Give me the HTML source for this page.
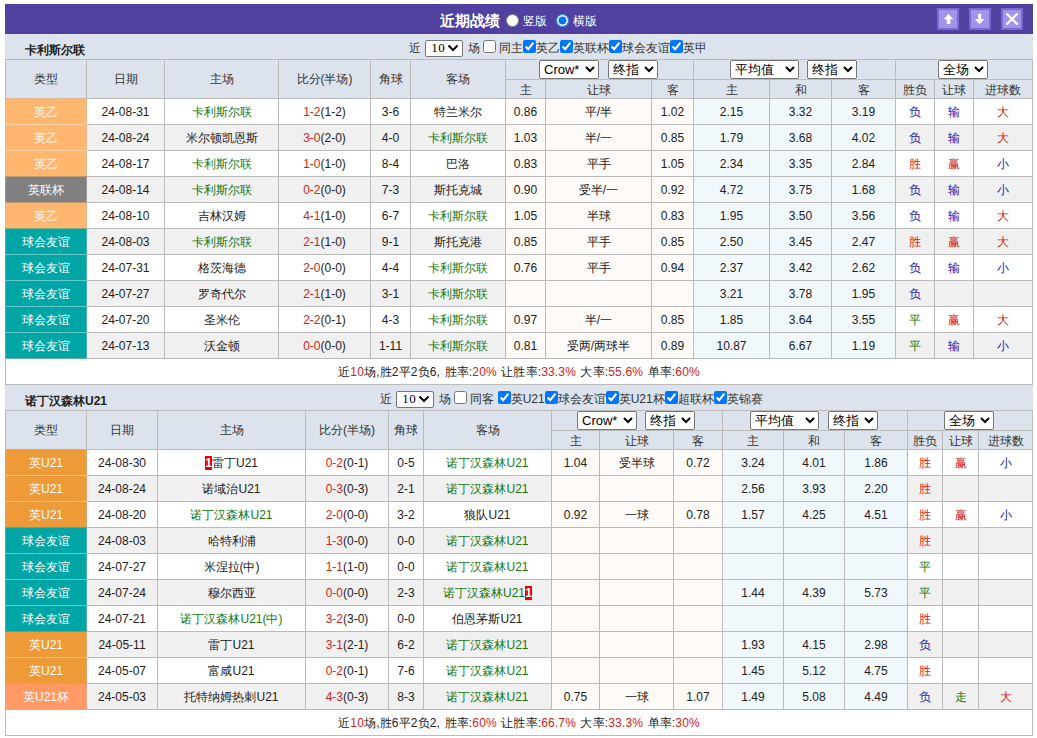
<!DOCTYPE html><html><head><meta charset="utf-8"><style>
html,body{margin:0;padding:0;background:#fff;width:1037px;height:738px;overflow:hidden}
body{font-family:"Liberation Sans", sans-serif;font-size:12px;color:#333;position:relative}
body>div{position:absolute;box-sizing:border-box}
.tt{color:#fff;font-size:12px;line-height:1;white-space:nowrap}
.rd{margin:0;width:13px;height:13px;display:block}
.flt{white-space:pre;font-size:12px;line-height:17px;height:17px;color:#333;display:flex;align-items:flex-start}
.flt input{width:13px;height:13px;margin:0;flex:none}
.flt .t{position:relative;top:0px}
select{margin:0;flex:none}
.n{flex:none;margin:0 1px;box-sizing:border-box;width:38px;height:17px;border:1px solid #767676;border-radius:2px;background:#fff;position:relative}
.n b{position:absolute;left:5px;top:-1px;font-weight:normal;font-family:"Liberation Serif",serif;font-size:13px;line-height:15px;color:#000;letter-spacing:0.3px}
.n svg{position:absolute;left:21px;top:3px}
select.s{height:19px;font-family:"Liberation Sans",sans-serif;font-size:13px;display:block}
.bd{display:inline-block;background:#E00;color:#fff;font-weight:bold;width:7px;height:14px;line-height:14px;text-align:center;font-size:12px}
</style></head><body><div style="left:5px;top:4px;width:1028px;height:30px;background:#5040A0"></div>
<div class="tt" style="left:440px;top:13px;font-size:15px;font-weight:bold">近期战绩</div>
<div style="left:506px;top:14px"><input class="rd" type="radio" name="v"></div>
<div class="tt" style="left:523px;top:15px">竖版</div>
<div style="left:556px;top:14px"><input class="rd" type="radio" name="v" checked></div>
<div class="tt" style="left:573px;top:15px">横版</div>
<div style="left:937px;top:8px;width:22px;height:22px;background:#A292EA;box-shadow:inset 0 0 0 2px #7A6AD2"><svg width="22" height="22"><path d="M11.5 5.8 L16.3 11.3 H13.3 V16 H9.7 V11.3 H6.7 Z" fill="#fff"/></svg></div>
<div style="left:969px;top:8px;width:22px;height:22px;background:#A292EA;box-shadow:inset 0 0 0 2px #7A6AD2"><svg width="22" height="22"><path d="M10.6 16.2 L5.9 11 H9 V5.8 H12.3 V11 H15.3 Z" fill="#fff"/></svg></div>
<div style="left:1001px;top:8px;width:22px;height:22px;background:#A292EA;box-shadow:inset 0 0 0 2px #7A6AD2"><svg width="22" height="22"><path d="M5.5 5.5 L16.5 16.5 M16.5 5.5 L5.5 16.5" stroke="#fff" stroke-width="2.3"/></svg></div>
<div style="left:5px;top:34px;width:1028px;height:25px;background:#DCE3EC"></div>
<div style="left:5px;top:34px;width:1028px;height:1px;background:#E6E6FA"></div>
<div style="left:25px;top:38px;width:200px;height:22px;font-weight:bold;font-size:12px;line-height:25px;color:#222">卡利斯尔联</div>
<div class="flt" style="left:409px;top:40px"><span class="t">近 </span><span class="n"><b>10</b><svg width="12" height="8" viewBox="0 0 12 8"><path d="M1.5 1.5 L6 6 L10.5 1.5" fill="none" stroke="#000" stroke-width="2"/></svg></span><span class="t"> 场 </span><input type="checkbox"><span class="t"> 同主</span><input type="checkbox" checked><span class="t">英乙</span><input type="checkbox" checked><span class="t">英联杯</span><input type="checkbox" checked><span class="t">球会友谊</span><input type="checkbox" checked><span class="t">英甲</span></div>
<div style="left:5px;top:59px;width:1028px;height:39px;background:#DCE3EC"></div>
<div style="left:6px;top:60px;width:80px;height:38px;display:flex;align-items:center;justify-content:center;white-space:nowrap;line-height:14px;color:#333333;"><span>类型</span></div>
<div style="left:87px;top:60px;width:77px;height:38px;display:flex;align-items:center;justify-content:center;white-space:nowrap;line-height:14px;color:#333333;"><span>日期</span></div>
<div style="left:165px;top:60px;width:113px;height:38px;display:flex;align-items:center;justify-content:center;white-space:nowrap;line-height:14px;color:#333333;"><span>主场</span></div>
<div style="left:279px;top:60px;width:91px;height:38px;display:flex;align-items:center;justify-content:center;white-space:nowrap;line-height:14px;color:#333333;"><span>比分(半场)</span></div>
<div style="left:371px;top:60px;width:39px;height:38px;display:flex;align-items:center;justify-content:center;white-space:nowrap;line-height:14px;color:#333333;"><span>角球</span></div>
<div style="left:411px;top:60px;width:94px;height:38px;display:flex;align-items:center;justify-content:center;white-space:nowrap;line-height:14px;color:#333333;"><span>客场</span></div>
<div style="left:506px;top:80px;width:39px;height:18px;display:flex;align-items:center;justify-content:center;white-space:nowrap;line-height:14px;color:#333333;"><span style="position:relative;top:1px">主</span></div>
<div style="left:546px;top:80px;width:105px;height:18px;display:flex;align-items:center;justify-content:center;white-space:nowrap;line-height:14px;color:#333333;"><span style="position:relative;top:1px">让球</span></div>
<div style="left:652px;top:80px;width:41px;height:18px;display:flex;align-items:center;justify-content:center;white-space:nowrap;line-height:14px;color:#333333;"><span style="position:relative;top:1px">客</span></div>
<div style="left:694px;top:80px;width:75px;height:18px;display:flex;align-items:center;justify-content:center;white-space:nowrap;line-height:14px;color:#333333;"><span style="position:relative;top:1px">主</span></div>
<div style="left:770px;top:80px;width:61px;height:18px;display:flex;align-items:center;justify-content:center;white-space:nowrap;line-height:14px;color:#333333;"><span style="position:relative;top:1px">和</span></div>
<div style="left:832px;top:80px;width:63px;height:18px;display:flex;align-items:center;justify-content:center;white-space:nowrap;line-height:14px;color:#333333;"><span style="position:relative;top:1px">客</span></div>
<div style="left:896px;top:80px;width:38px;height:18px;display:flex;align-items:center;justify-content:center;white-space:nowrap;line-height:14px;color:#333333;"><span style="position:relative;top:1px">胜负</span></div>
<div style="left:935px;top:80px;width:38px;height:18px;display:flex;align-items:center;justify-content:center;white-space:nowrap;line-height:14px;color:#333333;"><span style="position:relative;top:1px">让球</span></div>
<div style="left:974px;top:80px;width:58px;height:18px;display:flex;align-items:center;justify-content:center;white-space:nowrap;line-height:14px;color:#333333;"><span style="position:relative;top:1px">进球数</span></div>
<div style="left:539px;top:60px;width:60px;height:19px;"><select class="s" style="width:60px"><option>Crow*</option></select></div>
<div style="left:608px;top:60px;width:50px;height:19px;"><select class="s" style="width:50px"><option>终指</option></select></div>
<div style="left:730px;top:60px;width:69px;height:19px;"><select class="s" style="width:69px"><option>平均值</option></select></div>
<div style="left:807px;top:60px;width:50px;height:19px;"><select class="s" style="width:50px"><option>终指</option></select></div>
<div style="left:938px;top:60px;width:50px;height:19px;"><select class="s" style="width:50px"><option>全场</option></select></div>
<div style="left:6px;top:99px;width:80px;height:25px;display:flex;align-items:center;justify-content:center;white-space:nowrap;line-height:14px;background:#FFB66E;color:#FFFFFF;"><span>英乙</span></div>
<div style="left:87px;top:99px;width:77px;height:25px;display:flex;align-items:center;justify-content:center;white-space:nowrap;line-height:14px;background:#FFFFFF;color:#222222;"><span>24-08-31</span></div>
<div style="left:165px;top:99px;width:113px;height:25px;display:flex;align-items:center;justify-content:center;white-space:nowrap;line-height:14px;background:#FFFFFF;color:#157A15;"><span>卡利斯尔联</span></div>
<div style="left:279px;top:99px;width:91px;height:25px;display:flex;align-items:center;justify-content:center;white-space:nowrap;line-height:14px;background:#FFFFFF;color:#222222;"><span><span style="color:#D42020">1-2</span>(1-2)</span></div>
<div style="left:371px;top:99px;width:39px;height:25px;display:flex;align-items:center;justify-content:center;white-space:nowrap;line-height:14px;background:#FFFFFF;color:#222222;"><span>3-6</span></div>
<div style="left:411px;top:99px;width:94px;height:25px;display:flex;align-items:center;justify-content:center;white-space:nowrap;line-height:14px;background:#FFFFFF;color:#222222;"><span>特兰米尔</span></div>
<div style="left:506px;top:99px;width:39px;height:25px;display:flex;align-items:center;justify-content:center;white-space:nowrap;line-height:14px;background:#FDFAF7;color:#222222;"><span>0.86</span></div>
<div style="left:546px;top:99px;width:105px;height:25px;display:flex;align-items:center;justify-content:center;white-space:nowrap;line-height:14px;background:#FDFAF7;color:#222222;"><span>平/半</span></div>
<div style="left:652px;top:99px;width:41px;height:25px;display:flex;align-items:center;justify-content:center;white-space:nowrap;line-height:14px;background:#FDFAF7;color:#222222;"><span>1.02</span></div>
<div style="left:694px;top:99px;width:75px;height:25px;display:flex;align-items:center;justify-content:center;white-space:nowrap;line-height:14px;background:#F0F8FC;color:#222222;"><span>2.15</span></div>
<div style="left:770px;top:99px;width:61px;height:25px;display:flex;align-items:center;justify-content:center;white-space:nowrap;line-height:14px;background:#F0F8FC;color:#222222;"><span>3.32</span></div>
<div style="left:832px;top:99px;width:63px;height:25px;display:flex;align-items:center;justify-content:center;white-space:nowrap;line-height:14px;background:#F0F8FC;color:#222222;"><span>3.19</span></div>
<div style="left:896px;top:99px;width:38px;height:25px;display:flex;align-items:center;justify-content:center;white-space:nowrap;line-height:14px;background:#FFFFFF;color:#1818B0;"><span>负</span></div>
<div style="left:935px;top:99px;width:38px;height:25px;display:flex;align-items:center;justify-content:center;white-space:nowrap;line-height:14px;background:#FFFFFF;color:#1818B0;"><span>输</span></div>
<div style="left:974px;top:99px;width:58px;height:25px;display:flex;align-items:center;justify-content:center;white-space:nowrap;line-height:14px;background:#FFFFFF;color:#D42020;"><span>大</span></div>
<div style="left:6px;top:125px;width:80px;height:25px;display:flex;align-items:center;justify-content:center;white-space:nowrap;line-height:14px;background:#FFB66E;color:#FFFFFF;"><span>英乙</span></div>
<div style="left:87px;top:125px;width:77px;height:25px;display:flex;align-items:center;justify-content:center;white-space:nowrap;line-height:14px;background:#F0F0F0;color:#222222;"><span>24-08-24</span></div>
<div style="left:165px;top:125px;width:113px;height:25px;display:flex;align-items:center;justify-content:center;white-space:nowrap;line-height:14px;background:#F0F0F0;color:#222222;"><span>米尔顿凯恩斯</span></div>
<div style="left:279px;top:125px;width:91px;height:25px;display:flex;align-items:center;justify-content:center;white-space:nowrap;line-height:14px;background:#F0F0F0;color:#222222;"><span><span style="color:#D42020">3-0</span>(2-0)</span></div>
<div style="left:371px;top:125px;width:39px;height:25px;display:flex;align-items:center;justify-content:center;white-space:nowrap;line-height:14px;background:#F0F0F0;color:#222222;"><span>4-0</span></div>
<div style="left:411px;top:125px;width:94px;height:25px;display:flex;align-items:center;justify-content:center;white-space:nowrap;line-height:14px;background:#F0F0F0;color:#157A15;"><span>卡利斯尔联</span></div>
<div style="left:506px;top:125px;width:39px;height:25px;display:flex;align-items:center;justify-content:center;white-space:nowrap;line-height:14px;background:#FDFAF7;color:#222222;"><span>1.03</span></div>
<div style="left:546px;top:125px;width:105px;height:25px;display:flex;align-items:center;justify-content:center;white-space:nowrap;line-height:14px;background:#FDFAF7;color:#222222;"><span>半/一</span></div>
<div style="left:652px;top:125px;width:41px;height:25px;display:flex;align-items:center;justify-content:center;white-space:nowrap;line-height:14px;background:#FDFAF7;color:#222222;"><span>0.85</span></div>
<div style="left:694px;top:125px;width:75px;height:25px;display:flex;align-items:center;justify-content:center;white-space:nowrap;line-height:14px;background:#F0F8FC;color:#222222;"><span>1.79</span></div>
<div style="left:770px;top:125px;width:61px;height:25px;display:flex;align-items:center;justify-content:center;white-space:nowrap;line-height:14px;background:#F0F8FC;color:#222222;"><span>3.68</span></div>
<div style="left:832px;top:125px;width:63px;height:25px;display:flex;align-items:center;justify-content:center;white-space:nowrap;line-height:14px;background:#F0F8FC;color:#222222;"><span>4.02</span></div>
<div style="left:896px;top:125px;width:38px;height:25px;display:flex;align-items:center;justify-content:center;white-space:nowrap;line-height:14px;background:#F0F0F0;color:#1818B0;"><span>负</span></div>
<div style="left:935px;top:125px;width:38px;height:25px;display:flex;align-items:center;justify-content:center;white-space:nowrap;line-height:14px;background:#F0F0F0;color:#1818B0;"><span>输</span></div>
<div style="left:974px;top:125px;width:58px;height:25px;display:flex;align-items:center;justify-content:center;white-space:nowrap;line-height:14px;background:#F0F0F0;color:#D42020;"><span>大</span></div>
<div style="left:6px;top:151px;width:80px;height:25px;display:flex;align-items:center;justify-content:center;white-space:nowrap;line-height:14px;background:#FFB66E;color:#FFFFFF;"><span>英乙</span></div>
<div style="left:87px;top:151px;width:77px;height:25px;display:flex;align-items:center;justify-content:center;white-space:nowrap;line-height:14px;background:#FFFFFF;color:#222222;"><span>24-08-17</span></div>
<div style="left:165px;top:151px;width:113px;height:25px;display:flex;align-items:center;justify-content:center;white-space:nowrap;line-height:14px;background:#FFFFFF;color:#157A15;"><span>卡利斯尔联</span></div>
<div style="left:279px;top:151px;width:91px;height:25px;display:flex;align-items:center;justify-content:center;white-space:nowrap;line-height:14px;background:#FFFFFF;color:#222222;"><span><span style="color:#D42020">1-0</span>(1-0)</span></div>
<div style="left:371px;top:151px;width:39px;height:25px;display:flex;align-items:center;justify-content:center;white-space:nowrap;line-height:14px;background:#FFFFFF;color:#222222;"><span>8-4</span></div>
<div style="left:411px;top:151px;width:94px;height:25px;display:flex;align-items:center;justify-content:center;white-space:nowrap;line-height:14px;background:#FFFFFF;color:#222222;"><span>巴洛</span></div>
<div style="left:506px;top:151px;width:39px;height:25px;display:flex;align-items:center;justify-content:center;white-space:nowrap;line-height:14px;background:#FDFAF7;color:#222222;"><span>0.83</span></div>
<div style="left:546px;top:151px;width:105px;height:25px;display:flex;align-items:center;justify-content:center;white-space:nowrap;line-height:14px;background:#FDFAF7;color:#222222;"><span>平手</span></div>
<div style="left:652px;top:151px;width:41px;height:25px;display:flex;align-items:center;justify-content:center;white-space:nowrap;line-height:14px;background:#FDFAF7;color:#222222;"><span>1.05</span></div>
<div style="left:694px;top:151px;width:75px;height:25px;display:flex;align-items:center;justify-content:center;white-space:nowrap;line-height:14px;background:#F0F8FC;color:#222222;"><span>2.34</span></div>
<div style="left:770px;top:151px;width:61px;height:25px;display:flex;align-items:center;justify-content:center;white-space:nowrap;line-height:14px;background:#F0F8FC;color:#222222;"><span>3.35</span></div>
<div style="left:832px;top:151px;width:63px;height:25px;display:flex;align-items:center;justify-content:center;white-space:nowrap;line-height:14px;background:#F0F8FC;color:#222222;"><span>2.84</span></div>
<div style="left:896px;top:151px;width:38px;height:25px;display:flex;align-items:center;justify-content:center;white-space:nowrap;line-height:14px;background:#FFFFFF;color:#D42020;"><span>胜</span></div>
<div style="left:935px;top:151px;width:38px;height:25px;display:flex;align-items:center;justify-content:center;white-space:nowrap;line-height:14px;background:#FFFFFF;color:#D42020;"><span>赢</span></div>
<div style="left:974px;top:151px;width:58px;height:25px;display:flex;align-items:center;justify-content:center;white-space:nowrap;line-height:14px;background:#FFFFFF;color:#1818B0;"><span>小</span></div>
<div style="left:6px;top:177px;width:80px;height:25px;display:flex;align-items:center;justify-content:center;white-space:nowrap;line-height:14px;background:#808080;color:#FFFFFF;"><span>英联杯</span></div>
<div style="left:87px;top:177px;width:77px;height:25px;display:flex;align-items:center;justify-content:center;white-space:nowrap;line-height:14px;background:#F0F0F0;color:#222222;"><span>24-08-14</span></div>
<div style="left:165px;top:177px;width:113px;height:25px;display:flex;align-items:center;justify-content:center;white-space:nowrap;line-height:14px;background:#F0F0F0;color:#157A15;"><span>卡利斯尔联</span></div>
<div style="left:279px;top:177px;width:91px;height:25px;display:flex;align-items:center;justify-content:center;white-space:nowrap;line-height:14px;background:#F0F0F0;color:#222222;"><span><span style="color:#D42020">0-2</span>(0-0)</span></div>
<div style="left:371px;top:177px;width:39px;height:25px;display:flex;align-items:center;justify-content:center;white-space:nowrap;line-height:14px;background:#F0F0F0;color:#222222;"><span>7-3</span></div>
<div style="left:411px;top:177px;width:94px;height:25px;display:flex;align-items:center;justify-content:center;white-space:nowrap;line-height:14px;background:#F0F0F0;color:#222222;"><span>斯托克城</span></div>
<div style="left:506px;top:177px;width:39px;height:25px;display:flex;align-items:center;justify-content:center;white-space:nowrap;line-height:14px;background:#FDFAF7;color:#222222;"><span>0.90</span></div>
<div style="left:546px;top:177px;width:105px;height:25px;display:flex;align-items:center;justify-content:center;white-space:nowrap;line-height:14px;background:#FDFAF7;color:#222222;"><span>受半/一</span></div>
<div style="left:652px;top:177px;width:41px;height:25px;display:flex;align-items:center;justify-content:center;white-space:nowrap;line-height:14px;background:#FDFAF7;color:#222222;"><span>0.92</span></div>
<div style="left:694px;top:177px;width:75px;height:25px;display:flex;align-items:center;justify-content:center;white-space:nowrap;line-height:14px;background:#F0F8FC;color:#222222;"><span>4.72</span></div>
<div style="left:770px;top:177px;width:61px;height:25px;display:flex;align-items:center;justify-content:center;white-space:nowrap;line-height:14px;background:#F0F8FC;color:#222222;"><span>3.75</span></div>
<div style="left:832px;top:177px;width:63px;height:25px;display:flex;align-items:center;justify-content:center;white-space:nowrap;line-height:14px;background:#F0F8FC;color:#222222;"><span>1.68</span></div>
<div style="left:896px;top:177px;width:38px;height:25px;display:flex;align-items:center;justify-content:center;white-space:nowrap;line-height:14px;background:#F0F0F0;color:#1818B0;"><span>负</span></div>
<div style="left:935px;top:177px;width:38px;height:25px;display:flex;align-items:center;justify-content:center;white-space:nowrap;line-height:14px;background:#F0F0F0;color:#1818B0;"><span>输</span></div>
<div style="left:974px;top:177px;width:58px;height:25px;display:flex;align-items:center;justify-content:center;white-space:nowrap;line-height:14px;background:#F0F0F0;color:#1818B0;"><span>小</span></div>
<div style="left:6px;top:203px;width:80px;height:25px;display:flex;align-items:center;justify-content:center;white-space:nowrap;line-height:14px;background:#FFB66E;color:#FFFFFF;"><span>英乙</span></div>
<div style="left:87px;top:203px;width:77px;height:25px;display:flex;align-items:center;justify-content:center;white-space:nowrap;line-height:14px;background:#FFFFFF;color:#222222;"><span>24-08-10</span></div>
<div style="left:165px;top:203px;width:113px;height:25px;display:flex;align-items:center;justify-content:center;white-space:nowrap;line-height:14px;background:#FFFFFF;color:#222222;"><span>吉林汉姆</span></div>
<div style="left:279px;top:203px;width:91px;height:25px;display:flex;align-items:center;justify-content:center;white-space:nowrap;line-height:14px;background:#FFFFFF;color:#222222;"><span><span style="color:#D42020">4-1</span>(1-0)</span></div>
<div style="left:371px;top:203px;width:39px;height:25px;display:flex;align-items:center;justify-content:center;white-space:nowrap;line-height:14px;background:#FFFFFF;color:#222222;"><span>6-7</span></div>
<div style="left:411px;top:203px;width:94px;height:25px;display:flex;align-items:center;justify-content:center;white-space:nowrap;line-height:14px;background:#FFFFFF;color:#157A15;"><span>卡利斯尔联</span></div>
<div style="left:506px;top:203px;width:39px;height:25px;display:flex;align-items:center;justify-content:center;white-space:nowrap;line-height:14px;background:#FDFAF7;color:#222222;"><span>1.05</span></div>
<div style="left:546px;top:203px;width:105px;height:25px;display:flex;align-items:center;justify-content:center;white-space:nowrap;line-height:14px;background:#FDFAF7;color:#222222;"><span>半球</span></div>
<div style="left:652px;top:203px;width:41px;height:25px;display:flex;align-items:center;justify-content:center;white-space:nowrap;line-height:14px;background:#FDFAF7;color:#222222;"><span>0.83</span></div>
<div style="left:694px;top:203px;width:75px;height:25px;display:flex;align-items:center;justify-content:center;white-space:nowrap;line-height:14px;background:#F0F8FC;color:#222222;"><span>1.95</span></div>
<div style="left:770px;top:203px;width:61px;height:25px;display:flex;align-items:center;justify-content:center;white-space:nowrap;line-height:14px;background:#F0F8FC;color:#222222;"><span>3.50</span></div>
<div style="left:832px;top:203px;width:63px;height:25px;display:flex;align-items:center;justify-content:center;white-space:nowrap;line-height:14px;background:#F0F8FC;color:#222222;"><span>3.56</span></div>
<div style="left:896px;top:203px;width:38px;height:25px;display:flex;align-items:center;justify-content:center;white-space:nowrap;line-height:14px;background:#FFFFFF;color:#1818B0;"><span>负</span></div>
<div style="left:935px;top:203px;width:38px;height:25px;display:flex;align-items:center;justify-content:center;white-space:nowrap;line-height:14px;background:#FFFFFF;color:#1818B0;"><span>输</span></div>
<div style="left:974px;top:203px;width:58px;height:25px;display:flex;align-items:center;justify-content:center;white-space:nowrap;line-height:14px;background:#FFFFFF;color:#D42020;"><span>大</span></div>
<div style="left:6px;top:229px;width:80px;height:25px;display:flex;align-items:center;justify-content:center;white-space:nowrap;line-height:14px;background:#00A6A6;color:#FFFFFF;"><span>球会友谊</span></div>
<div style="left:87px;top:229px;width:77px;height:25px;display:flex;align-items:center;justify-content:center;white-space:nowrap;line-height:14px;background:#F0F0F0;color:#222222;"><span>24-08-03</span></div>
<div style="left:165px;top:229px;width:113px;height:25px;display:flex;align-items:center;justify-content:center;white-space:nowrap;line-height:14px;background:#F0F0F0;color:#157A15;"><span>卡利斯尔联</span></div>
<div style="left:279px;top:229px;width:91px;height:25px;display:flex;align-items:center;justify-content:center;white-space:nowrap;line-height:14px;background:#F0F0F0;color:#222222;"><span><span style="color:#D42020">2-1</span>(1-0)</span></div>
<div style="left:371px;top:229px;width:39px;height:25px;display:flex;align-items:center;justify-content:center;white-space:nowrap;line-height:14px;background:#F0F0F0;color:#222222;"><span>9-1</span></div>
<div style="left:411px;top:229px;width:94px;height:25px;display:flex;align-items:center;justify-content:center;white-space:nowrap;line-height:14px;background:#F0F0F0;color:#222222;"><span>斯托克港</span></div>
<div style="left:506px;top:229px;width:39px;height:25px;display:flex;align-items:center;justify-content:center;white-space:nowrap;line-height:14px;background:#FDFAF7;color:#222222;"><span>0.85</span></div>
<div style="left:546px;top:229px;width:105px;height:25px;display:flex;align-items:center;justify-content:center;white-space:nowrap;line-height:14px;background:#FDFAF7;color:#222222;"><span>平手</span></div>
<div style="left:652px;top:229px;width:41px;height:25px;display:flex;align-items:center;justify-content:center;white-space:nowrap;line-height:14px;background:#FDFAF7;color:#222222;"><span>0.85</span></div>
<div style="left:694px;top:229px;width:75px;height:25px;display:flex;align-items:center;justify-content:center;white-space:nowrap;line-height:14px;background:#F0F8FC;color:#222222;"><span>2.50</span></div>
<div style="left:770px;top:229px;width:61px;height:25px;display:flex;align-items:center;justify-content:center;white-space:nowrap;line-height:14px;background:#F0F8FC;color:#222222;"><span>3.45</span></div>
<div style="left:832px;top:229px;width:63px;height:25px;display:flex;align-items:center;justify-content:center;white-space:nowrap;line-height:14px;background:#F0F8FC;color:#222222;"><span>2.47</span></div>
<div style="left:896px;top:229px;width:38px;height:25px;display:flex;align-items:center;justify-content:center;white-space:nowrap;line-height:14px;background:#F0F0F0;color:#D42020;"><span>胜</span></div>
<div style="left:935px;top:229px;width:38px;height:25px;display:flex;align-items:center;justify-content:center;white-space:nowrap;line-height:14px;background:#F0F0F0;color:#D42020;"><span>赢</span></div>
<div style="left:974px;top:229px;width:58px;height:25px;display:flex;align-items:center;justify-content:center;white-space:nowrap;line-height:14px;background:#F0F0F0;color:#D42020;"><span>大</span></div>
<div style="left:6px;top:255px;width:80px;height:25px;display:flex;align-items:center;justify-content:center;white-space:nowrap;line-height:14px;background:#00A6A6;color:#FFFFFF;"><span>球会友谊</span></div>
<div style="left:87px;top:255px;width:77px;height:25px;display:flex;align-items:center;justify-content:center;white-space:nowrap;line-height:14px;background:#FFFFFF;color:#222222;"><span>24-07-31</span></div>
<div style="left:165px;top:255px;width:113px;height:25px;display:flex;align-items:center;justify-content:center;white-space:nowrap;line-height:14px;background:#FFFFFF;color:#222222;"><span>格茨海德</span></div>
<div style="left:279px;top:255px;width:91px;height:25px;display:flex;align-items:center;justify-content:center;white-space:nowrap;line-height:14px;background:#FFFFFF;color:#222222;"><span><span style="color:#D42020">2-0</span>(0-0)</span></div>
<div style="left:371px;top:255px;width:39px;height:25px;display:flex;align-items:center;justify-content:center;white-space:nowrap;line-height:14px;background:#FFFFFF;color:#222222;"><span>4-4</span></div>
<div style="left:411px;top:255px;width:94px;height:25px;display:flex;align-items:center;justify-content:center;white-space:nowrap;line-height:14px;background:#FFFFFF;color:#157A15;"><span>卡利斯尔联</span></div>
<div style="left:506px;top:255px;width:39px;height:25px;display:flex;align-items:center;justify-content:center;white-space:nowrap;line-height:14px;background:#FDFAF7;color:#222222;"><span>0.76</span></div>
<div style="left:546px;top:255px;width:105px;height:25px;display:flex;align-items:center;justify-content:center;white-space:nowrap;line-height:14px;background:#FDFAF7;color:#222222;"><span>平手</span></div>
<div style="left:652px;top:255px;width:41px;height:25px;display:flex;align-items:center;justify-content:center;white-space:nowrap;line-height:14px;background:#FDFAF7;color:#222222;"><span>0.94</span></div>
<div style="left:694px;top:255px;width:75px;height:25px;display:flex;align-items:center;justify-content:center;white-space:nowrap;line-height:14px;background:#F0F8FC;color:#222222;"><span>2.37</span></div>
<div style="left:770px;top:255px;width:61px;height:25px;display:flex;align-items:center;justify-content:center;white-space:nowrap;line-height:14px;background:#F0F8FC;color:#222222;"><span>3.42</span></div>
<div style="left:832px;top:255px;width:63px;height:25px;display:flex;align-items:center;justify-content:center;white-space:nowrap;line-height:14px;background:#F0F8FC;color:#222222;"><span>2.62</span></div>
<div style="left:896px;top:255px;width:38px;height:25px;display:flex;align-items:center;justify-content:center;white-space:nowrap;line-height:14px;background:#FFFFFF;color:#1818B0;"><span>负</span></div>
<div style="left:935px;top:255px;width:38px;height:25px;display:flex;align-items:center;justify-content:center;white-space:nowrap;line-height:14px;background:#FFFFFF;color:#1818B0;"><span>输</span></div>
<div style="left:974px;top:255px;width:58px;height:25px;display:flex;align-items:center;justify-content:center;white-space:nowrap;line-height:14px;background:#FFFFFF;color:#1818B0;"><span>小</span></div>
<div style="left:6px;top:281px;width:80px;height:25px;display:flex;align-items:center;justify-content:center;white-space:nowrap;line-height:14px;background:#00A6A6;color:#FFFFFF;"><span>球会友谊</span></div>
<div style="left:87px;top:281px;width:77px;height:25px;display:flex;align-items:center;justify-content:center;white-space:nowrap;line-height:14px;background:#F0F0F0;color:#222222;"><span>24-07-27</span></div>
<div style="left:165px;top:281px;width:113px;height:25px;display:flex;align-items:center;justify-content:center;white-space:nowrap;line-height:14px;background:#F0F0F0;color:#222222;"><span>罗奇代尔</span></div>
<div style="left:279px;top:281px;width:91px;height:25px;display:flex;align-items:center;justify-content:center;white-space:nowrap;line-height:14px;background:#F0F0F0;color:#222222;"><span><span style="color:#D42020">2-1</span>(1-0)</span></div>
<div style="left:371px;top:281px;width:39px;height:25px;display:flex;align-items:center;justify-content:center;white-space:nowrap;line-height:14px;background:#F0F0F0;color:#222222;"><span>3-1</span></div>
<div style="left:411px;top:281px;width:94px;height:25px;display:flex;align-items:center;justify-content:center;white-space:nowrap;line-height:14px;background:#F0F0F0;color:#157A15;"><span>卡利斯尔联</span></div>
<div style="left:506px;top:281px;width:39px;height:25px;display:flex;align-items:center;justify-content:center;white-space:nowrap;line-height:14px;background:#FDFAF7;color:#222222;"></div>
<div style="left:546px;top:281px;width:105px;height:25px;display:flex;align-items:center;justify-content:center;white-space:nowrap;line-height:14px;background:#FDFAF7;color:#222222;"></div>
<div style="left:652px;top:281px;width:41px;height:25px;display:flex;align-items:center;justify-content:center;white-space:nowrap;line-height:14px;background:#FDFAF7;color:#222222;"></div>
<div style="left:694px;top:281px;width:75px;height:25px;display:flex;align-items:center;justify-content:center;white-space:nowrap;line-height:14px;background:#F0F8FC;color:#222222;"><span>3.21</span></div>
<div style="left:770px;top:281px;width:61px;height:25px;display:flex;align-items:center;justify-content:center;white-space:nowrap;line-height:14px;background:#F0F8FC;color:#222222;"><span>3.78</span></div>
<div style="left:832px;top:281px;width:63px;height:25px;display:flex;align-items:center;justify-content:center;white-space:nowrap;line-height:14px;background:#F0F8FC;color:#222222;"><span>1.95</span></div>
<div style="left:896px;top:281px;width:38px;height:25px;display:flex;align-items:center;justify-content:center;white-space:nowrap;line-height:14px;background:#F0F0F0;color:#1818B0;"><span>负</span></div>
<div style="left:935px;top:281px;width:38px;height:25px;display:flex;align-items:center;justify-content:center;white-space:nowrap;line-height:14px;background:#F0F0F0;color:#222222;"></div>
<div style="left:974px;top:281px;width:58px;height:25px;display:flex;align-items:center;justify-content:center;white-space:nowrap;line-height:14px;background:#F0F0F0;color:#222222;"></div>
<div style="left:6px;top:307px;width:80px;height:25px;display:flex;align-items:center;justify-content:center;white-space:nowrap;line-height:14px;background:#00A6A6;color:#FFFFFF;"><span>球会友谊</span></div>
<div style="left:87px;top:307px;width:77px;height:25px;display:flex;align-items:center;justify-content:center;white-space:nowrap;line-height:14px;background:#FFFFFF;color:#222222;"><span>24-07-20</span></div>
<div style="left:165px;top:307px;width:113px;height:25px;display:flex;align-items:center;justify-content:center;white-space:nowrap;line-height:14px;background:#FFFFFF;color:#222222;"><span>圣米伦</span></div>
<div style="left:279px;top:307px;width:91px;height:25px;display:flex;align-items:center;justify-content:center;white-space:nowrap;line-height:14px;background:#FFFFFF;color:#222222;"><span><span style="color:#D42020">2-2</span>(0-1)</span></div>
<div style="left:371px;top:307px;width:39px;height:25px;display:flex;align-items:center;justify-content:center;white-space:nowrap;line-height:14px;background:#FFFFFF;color:#222222;"><span>4-3</span></div>
<div style="left:411px;top:307px;width:94px;height:25px;display:flex;align-items:center;justify-content:center;white-space:nowrap;line-height:14px;background:#FFFFFF;color:#157A15;"><span>卡利斯尔联</span></div>
<div style="left:506px;top:307px;width:39px;height:25px;display:flex;align-items:center;justify-content:center;white-space:nowrap;line-height:14px;background:#FDFAF7;color:#222222;"><span>0.97</span></div>
<div style="left:546px;top:307px;width:105px;height:25px;display:flex;align-items:center;justify-content:center;white-space:nowrap;line-height:14px;background:#FDFAF7;color:#222222;"><span>半/一</span></div>
<div style="left:652px;top:307px;width:41px;height:25px;display:flex;align-items:center;justify-content:center;white-space:nowrap;line-height:14px;background:#FDFAF7;color:#222222;"><span>0.85</span></div>
<div style="left:694px;top:307px;width:75px;height:25px;display:flex;align-items:center;justify-content:center;white-space:nowrap;line-height:14px;background:#F0F8FC;color:#222222;"><span>1.85</span></div>
<div style="left:770px;top:307px;width:61px;height:25px;display:flex;align-items:center;justify-content:center;white-space:nowrap;line-height:14px;background:#F0F8FC;color:#222222;"><span>3.64</span></div>
<div style="left:832px;top:307px;width:63px;height:25px;display:flex;align-items:center;justify-content:center;white-space:nowrap;line-height:14px;background:#F0F8FC;color:#222222;"><span>3.55</span></div>
<div style="left:896px;top:307px;width:38px;height:25px;display:flex;align-items:center;justify-content:center;white-space:nowrap;line-height:14px;background:#FFFFFF;color:#157A15;"><span>平</span></div>
<div style="left:935px;top:307px;width:38px;height:25px;display:flex;align-items:center;justify-content:center;white-space:nowrap;line-height:14px;background:#FFFFFF;color:#D42020;"><span>赢</span></div>
<div style="left:974px;top:307px;width:58px;height:25px;display:flex;align-items:center;justify-content:center;white-space:nowrap;line-height:14px;background:#FFFFFF;color:#D42020;"><span>大</span></div>
<div style="left:6px;top:333px;width:80px;height:25px;display:flex;align-items:center;justify-content:center;white-space:nowrap;line-height:14px;background:#00A6A6;color:#FFFFFF;"><span>球会友谊</span></div>
<div style="left:87px;top:333px;width:77px;height:25px;display:flex;align-items:center;justify-content:center;white-space:nowrap;line-height:14px;background:#F0F0F0;color:#222222;"><span>24-07-13</span></div>
<div style="left:165px;top:333px;width:113px;height:25px;display:flex;align-items:center;justify-content:center;white-space:nowrap;line-height:14px;background:#F0F0F0;color:#222222;"><span>沃金顿</span></div>
<div style="left:279px;top:333px;width:91px;height:25px;display:flex;align-items:center;justify-content:center;white-space:nowrap;line-height:14px;background:#F0F0F0;color:#222222;"><span><span style="color:#D42020">0-0</span>(0-0)</span></div>
<div style="left:371px;top:333px;width:39px;height:25px;display:flex;align-items:center;justify-content:center;white-space:nowrap;line-height:14px;background:#F0F0F0;color:#222222;"><span>1-11</span></div>
<div style="left:411px;top:333px;width:94px;height:25px;display:flex;align-items:center;justify-content:center;white-space:nowrap;line-height:14px;background:#F0F0F0;color:#157A15;"><span>卡利斯尔联</span></div>
<div style="left:506px;top:333px;width:39px;height:25px;display:flex;align-items:center;justify-content:center;white-space:nowrap;line-height:14px;background:#FDFAF7;color:#222222;"><span>0.81</span></div>
<div style="left:546px;top:333px;width:105px;height:25px;display:flex;align-items:center;justify-content:center;white-space:nowrap;line-height:14px;background:#FDFAF7;color:#222222;"><span>受两/两球半</span></div>
<div style="left:652px;top:333px;width:41px;height:25px;display:flex;align-items:center;justify-content:center;white-space:nowrap;line-height:14px;background:#FDFAF7;color:#222222;"><span>0.89</span></div>
<div style="left:694px;top:333px;width:75px;height:25px;display:flex;align-items:center;justify-content:center;white-space:nowrap;line-height:14px;background:#F0F8FC;color:#222222;"><span>10.87</span></div>
<div style="left:770px;top:333px;width:61px;height:25px;display:flex;align-items:center;justify-content:center;white-space:nowrap;line-height:14px;background:#F0F8FC;color:#222222;"><span>6.67</span></div>
<div style="left:832px;top:333px;width:63px;height:25px;display:flex;align-items:center;justify-content:center;white-space:nowrap;line-height:14px;background:#F0F8FC;color:#222222;"><span>1.19</span></div>
<div style="left:896px;top:333px;width:38px;height:25px;display:flex;align-items:center;justify-content:center;white-space:nowrap;line-height:14px;background:#F0F0F0;color:#157A15;"><span>平</span></div>
<div style="left:935px;top:333px;width:38px;height:25px;display:flex;align-items:center;justify-content:center;white-space:nowrap;line-height:14px;background:#F0F0F0;color:#1818B0;"><span>输</span></div>
<div style="left:974px;top:333px;width:58px;height:25px;display:flex;align-items:center;justify-content:center;white-space:nowrap;line-height:14px;background:#F0F0F0;color:#1818B0;"><span>小</span></div>
<div style="left:6px;top:359px;width:1026px;height:25px;display:flex;align-items:center;justify-content:center;white-space:nowrap;line-height:14px;background:#FFFFFF;color:#222222;letter-spacing:0.15px;word-spacing:1px;"><span>近<span style="color:#D42020">10</span>场,胜2平2负6, 胜率:<span style="color:#D42020">20%</span> 让胜率:<span style="color:#D42020">33.3%</span> 大率:<span style="color:#D42020">55.6%</span> 单率:<span style="color:#D42020">60%</span></span></div>
<div style="left:5px;top:59px;width:1028px;height:1px;background:#BBBBBB"></div>
<div style="left:505px;top:79px;width:528px;height:1px;background:#BBBBBB"></div>
<div style="left:5px;top:98px;width:1028px;height:1px;background:#BBBBBB"></div>
<div style="left:5px;top:124px;width:1028px;height:1px;background:#BBBBBB"></div>
<div style="left:5px;top:150px;width:1028px;height:1px;background:#BBBBBB"></div>
<div style="left:5px;top:176px;width:1028px;height:1px;background:#BBBBBB"></div>
<div style="left:5px;top:202px;width:1028px;height:1px;background:#BBBBBB"></div>
<div style="left:5px;top:228px;width:1028px;height:1px;background:#BBBBBB"></div>
<div style="left:5px;top:254px;width:1028px;height:1px;background:#BBBBBB"></div>
<div style="left:5px;top:280px;width:1028px;height:1px;background:#BBBBBB"></div>
<div style="left:5px;top:306px;width:1028px;height:1px;background:#BBBBBB"></div>
<div style="left:5px;top:332px;width:1028px;height:1px;background:#BBBBBB"></div>
<div style="left:5px;top:358px;width:1028px;height:1px;background:#BBBBBB"></div>
<div style="left:5px;top:384px;width:1028px;height:1px;background:#BBBBBB"></div>
<div style="left:5px;top:59px;width:1px;height:326px;background:#BBBBBB"></div>
<div style="left:86px;top:59px;width:1px;height:300px;background:#BBBBBB"></div>
<div style="left:164px;top:59px;width:1px;height:300px;background:#BBBBBB"></div>
<div style="left:278px;top:59px;width:1px;height:300px;background:#BBBBBB"></div>
<div style="left:370px;top:59px;width:1px;height:300px;background:#BBBBBB"></div>
<div style="left:410px;top:59px;width:1px;height:300px;background:#BBBBBB"></div>
<div style="left:505px;top:59px;width:1px;height:300px;background:#BBBBBB"></div>
<div style="left:545px;top:79px;width:1px;height:280px;background:#BBBBBB"></div>
<div style="left:651px;top:79px;width:1px;height:280px;background:#BBBBBB"></div>
<div style="left:693px;top:59px;width:1px;height:300px;background:#BBBBBB"></div>
<div style="left:769px;top:79px;width:1px;height:280px;background:#BBBBBB"></div>
<div style="left:831px;top:79px;width:1px;height:280px;background:#BBBBBB"></div>
<div style="left:895px;top:59px;width:1px;height:300px;background:#BBBBBB"></div>
<div style="left:934px;top:79px;width:1px;height:280px;background:#BBBBBB"></div>
<div style="left:973px;top:79px;width:1px;height:280px;background:#BBBBBB"></div>
<div style="left:1032px;top:59px;width:1px;height:326px;background:#BBBBBB"></div>
<div style="left:5px;top:98px;width:82px;height:27px;background:#FFB66E"></div>
<div style="left:6px;top:99px;width:80px;height:25px;display:flex;align-items:center;justify-content:center;white-space:nowrap;line-height:14px;color:#FFFFFF;"><span>英乙</span></div>
<div style="left:5px;top:98px;width:82px;height:1px;background:#DDB894"></div>
<div style="left:86px;top:99px;width:1px;height:25px;background:#E4B88D"></div>
<div style="left:5px;top:99px;width:1px;height:25px;background:#E4B88D"></div>
<div style="left:5px;top:124px;width:82px;height:27px;background:#FFB66E"></div>
<div style="left:6px;top:125px;width:80px;height:25px;display:flex;align-items:center;justify-content:center;white-space:nowrap;line-height:14px;color:#FFFFFF;"><span>英乙</span></div>
<div style="left:5px;top:124px;width:82px;height:1px;background:#FFD3A8"></div>
<div style="left:86px;top:125px;width:1px;height:25px;background:#E4B88D"></div>
<div style="left:5px;top:125px;width:1px;height:25px;background:#E4B88D"></div>
<div style="left:5px;top:150px;width:82px;height:27px;background:#FFB66E"></div>
<div style="left:6px;top:151px;width:80px;height:25px;display:flex;align-items:center;justify-content:center;white-space:nowrap;line-height:14px;color:#FFFFFF;"><span>英乙</span></div>
<div style="left:5px;top:150px;width:82px;height:1px;background:#FFD3A8"></div>
<div style="left:86px;top:151px;width:1px;height:25px;background:#E4B88D"></div>
<div style="left:5px;top:151px;width:1px;height:25px;background:#E4B88D"></div>
<div style="left:5px;top:176px;width:82px;height:27px;background:#808080"></div>
<div style="left:6px;top:177px;width:80px;height:25px;display:flex;align-items:center;justify-content:center;white-space:nowrap;line-height:14px;color:#FFFFFF;"><span>英联杯</span></div>
<div style="left:5px;top:176px;width:82px;height:1px;background:#C09B77"></div>
<div style="left:86px;top:177px;width:1px;height:25px;background:#989898"></div>
<div style="left:5px;top:177px;width:1px;height:25px;background:#989898"></div>
<div style="left:5px;top:202px;width:82px;height:27px;background:#FFB66E"></div>
<div style="left:6px;top:203px;width:80px;height:25px;display:flex;align-items:center;justify-content:center;white-space:nowrap;line-height:14px;color:#FFFFFF;"><span>英乙</span></div>
<div style="left:5px;top:202px;width:82px;height:1px;background:#C09B77"></div>
<div style="left:86px;top:203px;width:1px;height:25px;background:#E4B88D"></div>
<div style="left:5px;top:203px;width:1px;height:25px;background:#E4B88D"></div>
<div style="left:5px;top:228px;width:82px;height:27px;background:#00A6A6"></div>
<div style="left:6px;top:229px;width:80px;height:25px;display:flex;align-items:center;justify-content:center;white-space:nowrap;line-height:14px;color:#FFFFFF;"><span>球会友谊</span></div>
<div style="left:5px;top:228px;width:82px;height:1px;background:#80AE8A"></div>
<div style="left:86px;top:229px;width:1px;height:25px;background:#4BAEAE"></div>
<div style="left:5px;top:229px;width:1px;height:25px;background:#4BAEAE"></div>
<div style="left:5px;top:254px;width:82px;height:27px;background:#00A6A6"></div>
<div style="left:6px;top:255px;width:80px;height:25px;display:flex;align-items:center;justify-content:center;white-space:nowrap;line-height:14px;color:#FFFFFF;"><span>球会友谊</span></div>
<div style="left:5px;top:254px;width:82px;height:1px;background:#66CACA"></div>
<div style="left:86px;top:255px;width:1px;height:25px;background:#4BAEAE"></div>
<div style="left:5px;top:255px;width:1px;height:25px;background:#4BAEAE"></div>
<div style="left:5px;top:280px;width:82px;height:27px;background:#00A6A6"></div>
<div style="left:6px;top:281px;width:80px;height:25px;display:flex;align-items:center;justify-content:center;white-space:nowrap;line-height:14px;color:#FFFFFF;"><span>球会友谊</span></div>
<div style="left:5px;top:280px;width:82px;height:1px;background:#66CACA"></div>
<div style="left:86px;top:281px;width:1px;height:25px;background:#4BAEAE"></div>
<div style="left:5px;top:281px;width:1px;height:25px;background:#4BAEAE"></div>
<div style="left:5px;top:306px;width:82px;height:27px;background:#00A6A6"></div>
<div style="left:6px;top:307px;width:80px;height:25px;display:flex;align-items:center;justify-content:center;white-space:nowrap;line-height:14px;color:#FFFFFF;"><span>球会友谊</span></div>
<div style="left:5px;top:306px;width:82px;height:1px;background:#66CACA"></div>
<div style="left:86px;top:307px;width:1px;height:25px;background:#4BAEAE"></div>
<div style="left:5px;top:307px;width:1px;height:25px;background:#4BAEAE"></div>
<div style="left:5px;top:332px;width:82px;height:27px;background:#00A6A6"></div>
<div style="left:6px;top:333px;width:80px;height:25px;display:flex;align-items:center;justify-content:center;white-space:nowrap;line-height:14px;color:#FFFFFF;"><span>球会友谊</span></div>
<div style="left:5px;top:332px;width:82px;height:1px;background:#66CACA"></div>
<div style="left:86px;top:333px;width:1px;height:25px;background:#4BAEAE"></div>
<div style="left:5px;top:333px;width:1px;height:25px;background:#4BAEAE"></div>
<div style="left:5px;top:358px;width:82px;height:1px;background:#5EB0B0"></div>
<div style="left:5px;top:385px;width:1028px;height:25px;background:#DCE3EC"></div>
<div style="left:25px;top:389px;width:200px;height:22px;font-weight:bold;font-size:12px;line-height:25px;color:#222">诺丁汉森林U21</div>
<div class="flt" style="left:380px;top:391px"><span class="t">近 </span><span class="n"><b>10</b><svg width="12" height="8" viewBox="0 0 12 8"><path d="M1.5 1.5 L6 6 L10.5 1.5" fill="none" stroke="#000" stroke-width="2"/></svg></span><span class="t"> 场 </span><input type="checkbox"><span class="t"> 同客 </span><input type="checkbox" checked><span class="t">英U21</span><input type="checkbox" checked><span class="t">球会友谊</span><input type="checkbox" checked><span class="t">英U21杯</span><input type="checkbox" checked><span class="t">超联杯</span><input type="checkbox" checked><span class="t">英锦赛</span></div>
<div style="left:5px;top:410px;width:1028px;height:39px;background:#DCE3EC"></div>
<div style="left:6px;top:411px;width:80px;height:38px;display:flex;align-items:center;justify-content:center;white-space:nowrap;line-height:14px;color:#333333;"><span>类型</span></div>
<div style="left:87px;top:411px;width:70px;height:38px;display:flex;align-items:center;justify-content:center;white-space:nowrap;line-height:14px;color:#333333;"><span>日期</span></div>
<div style="left:158px;top:411px;width:147px;height:38px;display:flex;align-items:center;justify-content:center;white-space:nowrap;line-height:14px;color:#333333;"><span>主场</span></div>
<div style="left:306px;top:411px;width:82px;height:38px;display:flex;align-items:center;justify-content:center;white-space:nowrap;line-height:14px;color:#333333;"><span>比分(半场)</span></div>
<div style="left:389px;top:411px;width:34px;height:38px;display:flex;align-items:center;justify-content:center;white-space:nowrap;line-height:14px;color:#333333;"><span>角球</span></div>
<div style="left:424px;top:411px;width:127px;height:38px;display:flex;align-items:center;justify-content:center;white-space:nowrap;line-height:14px;color:#333333;"><span>客场</span></div>
<div style="left:552px;top:431px;width:47px;height:18px;display:flex;align-items:center;justify-content:center;white-space:nowrap;line-height:14px;color:#333333;"><span style="position:relative;top:1px">主</span></div>
<div style="left:600px;top:431px;width:73px;height:18px;display:flex;align-items:center;justify-content:center;white-space:nowrap;line-height:14px;color:#333333;"><span style="position:relative;top:1px">让球</span></div>
<div style="left:674px;top:431px;width:48px;height:18px;display:flex;align-items:center;justify-content:center;white-space:nowrap;line-height:14px;color:#333333;"><span style="position:relative;top:1px">客</span></div>
<div style="left:723px;top:431px;width:60px;height:18px;display:flex;align-items:center;justify-content:center;white-space:nowrap;line-height:14px;color:#333333;"><span style="position:relative;top:1px">主</span></div>
<div style="left:784px;top:431px;width:60px;height:18px;display:flex;align-items:center;justify-content:center;white-space:nowrap;line-height:14px;color:#333333;"><span style="position:relative;top:1px">和</span></div>
<div style="left:845px;top:431px;width:62px;height:18px;display:flex;align-items:center;justify-content:center;white-space:nowrap;line-height:14px;color:#333333;"><span style="position:relative;top:1px">客</span></div>
<div style="left:908px;top:431px;width:34px;height:18px;display:flex;align-items:center;justify-content:center;white-space:nowrap;line-height:14px;color:#333333;"><span style="position:relative;top:1px">胜负</span></div>
<div style="left:943px;top:431px;width:35px;height:18px;display:flex;align-items:center;justify-content:center;white-space:nowrap;line-height:14px;color:#333333;"><span style="position:relative;top:1px">让球</span></div>
<div style="left:979px;top:431px;width:53px;height:18px;display:flex;align-items:center;justify-content:center;white-space:nowrap;line-height:14px;color:#333333;"><span style="position:relative;top:1px">进球数</span></div>
<div style="left:577px;top:411px;width:60px;height:19px;"><select class="s" style="width:60px"><option>Crow*</option></select></div>
<div style="left:645px;top:411px;width:50px;height:19px;"><select class="s" style="width:50px"><option>终指</option></select></div>
<div style="left:750px;top:411px;width:69px;height:19px;"><select class="s" style="width:69px"><option>平均值</option></select></div>
<div style="left:828px;top:411px;width:50px;height:19px;"><select class="s" style="width:50px"><option>终指</option></select></div>
<div style="left:944px;top:411px;width:50px;height:19px;"><select class="s" style="width:50px"><option>全场</option></select></div>
<div style="left:6px;top:450px;width:80px;height:25px;display:flex;align-items:center;justify-content:center;white-space:nowrap;line-height:14px;background:#EE9A38;color:#FFFFFF;"><span>英U21</span></div>
<div style="left:87px;top:450px;width:70px;height:25px;display:flex;align-items:center;justify-content:center;white-space:nowrap;line-height:14px;background:#FFFFFF;color:#222222;"><span>24-08-30</span></div>
<div style="left:158px;top:450px;width:147px;height:25px;display:flex;align-items:center;justify-content:center;white-space:nowrap;line-height:14px;background:#FFFFFF;color:#222222;"><span><span class="bd">1</span>雷丁U21</span></div>
<div style="left:306px;top:450px;width:82px;height:25px;display:flex;align-items:center;justify-content:center;white-space:nowrap;line-height:14px;background:#FFFFFF;color:#222222;"><span><span style="color:#D42020">0-2</span>(0-1)</span></div>
<div style="left:389px;top:450px;width:34px;height:25px;display:flex;align-items:center;justify-content:center;white-space:nowrap;line-height:14px;background:#FFFFFF;color:#222222;"><span>0-5</span></div>
<div style="left:424px;top:450px;width:127px;height:25px;display:flex;align-items:center;justify-content:center;white-space:nowrap;line-height:14px;background:#FFFFFF;color:#157A15;"><span>诺丁汉森林U21</span></div>
<div style="left:552px;top:450px;width:47px;height:25px;display:flex;align-items:center;justify-content:center;white-space:nowrap;line-height:14px;background:#FDFAF7;color:#222222;"><span>1.04</span></div>
<div style="left:600px;top:450px;width:73px;height:25px;display:flex;align-items:center;justify-content:center;white-space:nowrap;line-height:14px;background:#FDFAF7;color:#222222;"><span>受半球</span></div>
<div style="left:674px;top:450px;width:48px;height:25px;display:flex;align-items:center;justify-content:center;white-space:nowrap;line-height:14px;background:#FDFAF7;color:#222222;"><span>0.72</span></div>
<div style="left:723px;top:450px;width:60px;height:25px;display:flex;align-items:center;justify-content:center;white-space:nowrap;line-height:14px;background:#F0F8FC;color:#222222;"><span>3.24</span></div>
<div style="left:784px;top:450px;width:60px;height:25px;display:flex;align-items:center;justify-content:center;white-space:nowrap;line-height:14px;background:#F0F8FC;color:#222222;"><span>4.01</span></div>
<div style="left:845px;top:450px;width:62px;height:25px;display:flex;align-items:center;justify-content:center;white-space:nowrap;line-height:14px;background:#F0F8FC;color:#222222;"><span>1.86</span></div>
<div style="left:908px;top:450px;width:34px;height:25px;display:flex;align-items:center;justify-content:center;white-space:nowrap;line-height:14px;background:#FFFFFF;color:#D42020;"><span>胜</span></div>
<div style="left:943px;top:450px;width:35px;height:25px;display:flex;align-items:center;justify-content:center;white-space:nowrap;line-height:14px;background:#FFFFFF;color:#D42020;"><span>赢</span></div>
<div style="left:979px;top:450px;width:53px;height:25px;display:flex;align-items:center;justify-content:center;white-space:nowrap;line-height:14px;background:#FFFFFF;color:#1818B0;"><span>小</span></div>
<div style="left:6px;top:476px;width:80px;height:25px;display:flex;align-items:center;justify-content:center;white-space:nowrap;line-height:14px;background:#EE9A38;color:#FFFFFF;"><span>英U21</span></div>
<div style="left:87px;top:476px;width:70px;height:25px;display:flex;align-items:center;justify-content:center;white-space:nowrap;line-height:14px;background:#F0F0F0;color:#222222;"><span>24-08-24</span></div>
<div style="left:158px;top:476px;width:147px;height:25px;display:flex;align-items:center;justify-content:center;white-space:nowrap;line-height:14px;background:#F0F0F0;color:#222222;"><span>诺域治U21</span></div>
<div style="left:306px;top:476px;width:82px;height:25px;display:flex;align-items:center;justify-content:center;white-space:nowrap;line-height:14px;background:#F0F0F0;color:#222222;"><span><span style="color:#D42020">0-3</span>(0-3)</span></div>
<div style="left:389px;top:476px;width:34px;height:25px;display:flex;align-items:center;justify-content:center;white-space:nowrap;line-height:14px;background:#F0F0F0;color:#222222;"><span>2-1</span></div>
<div style="left:424px;top:476px;width:127px;height:25px;display:flex;align-items:center;justify-content:center;white-space:nowrap;line-height:14px;background:#F0F0F0;color:#157A15;"><span>诺丁汉森林U21</span></div>
<div style="left:552px;top:476px;width:47px;height:25px;display:flex;align-items:center;justify-content:center;white-space:nowrap;line-height:14px;background:#FDFAF7;color:#222222;"></div>
<div style="left:600px;top:476px;width:73px;height:25px;display:flex;align-items:center;justify-content:center;white-space:nowrap;line-height:14px;background:#FDFAF7;color:#222222;"></div>
<div style="left:674px;top:476px;width:48px;height:25px;display:flex;align-items:center;justify-content:center;white-space:nowrap;line-height:14px;background:#FDFAF7;color:#222222;"></div>
<div style="left:723px;top:476px;width:60px;height:25px;display:flex;align-items:center;justify-content:center;white-space:nowrap;line-height:14px;background:#F0F8FC;color:#222222;"><span>2.56</span></div>
<div style="left:784px;top:476px;width:60px;height:25px;display:flex;align-items:center;justify-content:center;white-space:nowrap;line-height:14px;background:#F0F8FC;color:#222222;"><span>3.93</span></div>
<div style="left:845px;top:476px;width:62px;height:25px;display:flex;align-items:center;justify-content:center;white-space:nowrap;line-height:14px;background:#F0F8FC;color:#222222;"><span>2.20</span></div>
<div style="left:908px;top:476px;width:34px;height:25px;display:flex;align-items:center;justify-content:center;white-space:nowrap;line-height:14px;background:#F0F0F0;color:#D42020;"><span>胜</span></div>
<div style="left:943px;top:476px;width:35px;height:25px;display:flex;align-items:center;justify-content:center;white-space:nowrap;line-height:14px;background:#F0F0F0;color:#222222;"></div>
<div style="left:979px;top:476px;width:53px;height:25px;display:flex;align-items:center;justify-content:center;white-space:nowrap;line-height:14px;background:#F0F0F0;color:#222222;"></div>
<div style="left:6px;top:502px;width:80px;height:25px;display:flex;align-items:center;justify-content:center;white-space:nowrap;line-height:14px;background:#EE9A38;color:#FFFFFF;"><span>英U21</span></div>
<div style="left:87px;top:502px;width:70px;height:25px;display:flex;align-items:center;justify-content:center;white-space:nowrap;line-height:14px;background:#FFFFFF;color:#222222;"><span>24-08-20</span></div>
<div style="left:158px;top:502px;width:147px;height:25px;display:flex;align-items:center;justify-content:center;white-space:nowrap;line-height:14px;background:#FFFFFF;color:#157A15;"><span>诺丁汉森林U21</span></div>
<div style="left:306px;top:502px;width:82px;height:25px;display:flex;align-items:center;justify-content:center;white-space:nowrap;line-height:14px;background:#FFFFFF;color:#222222;"><span><span style="color:#D42020">2-0</span>(0-0)</span></div>
<div style="left:389px;top:502px;width:34px;height:25px;display:flex;align-items:center;justify-content:center;white-space:nowrap;line-height:14px;background:#FFFFFF;color:#222222;"><span>3-2</span></div>
<div style="left:424px;top:502px;width:127px;height:25px;display:flex;align-items:center;justify-content:center;white-space:nowrap;line-height:14px;background:#FFFFFF;color:#222222;"><span>狼队U21</span></div>
<div style="left:552px;top:502px;width:47px;height:25px;display:flex;align-items:center;justify-content:center;white-space:nowrap;line-height:14px;background:#FDFAF7;color:#222222;"><span>0.92</span></div>
<div style="left:600px;top:502px;width:73px;height:25px;display:flex;align-items:center;justify-content:center;white-space:nowrap;line-height:14px;background:#FDFAF7;color:#222222;"><span>一球</span></div>
<div style="left:674px;top:502px;width:48px;height:25px;display:flex;align-items:center;justify-content:center;white-space:nowrap;line-height:14px;background:#FDFAF7;color:#222222;"><span>0.78</span></div>
<div style="left:723px;top:502px;width:60px;height:25px;display:flex;align-items:center;justify-content:center;white-space:nowrap;line-height:14px;background:#F0F8FC;color:#222222;"><span>1.57</span></div>
<div style="left:784px;top:502px;width:60px;height:25px;display:flex;align-items:center;justify-content:center;white-space:nowrap;line-height:14px;background:#F0F8FC;color:#222222;"><span>4.25</span></div>
<div style="left:845px;top:502px;width:62px;height:25px;display:flex;align-items:center;justify-content:center;white-space:nowrap;line-height:14px;background:#F0F8FC;color:#222222;"><span>4.51</span></div>
<div style="left:908px;top:502px;width:34px;height:25px;display:flex;align-items:center;justify-content:center;white-space:nowrap;line-height:14px;background:#FFFFFF;color:#D42020;"><span>胜</span></div>
<div style="left:943px;top:502px;width:35px;height:25px;display:flex;align-items:center;justify-content:center;white-space:nowrap;line-height:14px;background:#FFFFFF;color:#D42020;"><span>赢</span></div>
<div style="left:979px;top:502px;width:53px;height:25px;display:flex;align-items:center;justify-content:center;white-space:nowrap;line-height:14px;background:#FFFFFF;color:#1818B0;"><span>小</span></div>
<div style="left:6px;top:528px;width:80px;height:25px;display:flex;align-items:center;justify-content:center;white-space:nowrap;line-height:14px;background:#00A6A6;color:#FFFFFF;"><span>球会友谊</span></div>
<div style="left:87px;top:528px;width:70px;height:25px;display:flex;align-items:center;justify-content:center;white-space:nowrap;line-height:14px;background:#F0F0F0;color:#222222;"><span>24-08-03</span></div>
<div style="left:158px;top:528px;width:147px;height:25px;display:flex;align-items:center;justify-content:center;white-space:nowrap;line-height:14px;background:#F0F0F0;color:#222222;"><span>哈特利浦</span></div>
<div style="left:306px;top:528px;width:82px;height:25px;display:flex;align-items:center;justify-content:center;white-space:nowrap;line-height:14px;background:#F0F0F0;color:#222222;"><span><span style="color:#D42020">1-3</span>(0-0)</span></div>
<div style="left:389px;top:528px;width:34px;height:25px;display:flex;align-items:center;justify-content:center;white-space:nowrap;line-height:14px;background:#F0F0F0;color:#222222;"><span>0-0</span></div>
<div style="left:424px;top:528px;width:127px;height:25px;display:flex;align-items:center;justify-content:center;white-space:nowrap;line-height:14px;background:#F0F0F0;color:#157A15;"><span>诺丁汉森林U21</span></div>
<div style="left:552px;top:528px;width:47px;height:25px;display:flex;align-items:center;justify-content:center;white-space:nowrap;line-height:14px;background:#FDFAF7;color:#222222;"></div>
<div style="left:600px;top:528px;width:73px;height:25px;display:flex;align-items:center;justify-content:center;white-space:nowrap;line-height:14px;background:#FDFAF7;color:#222222;"></div>
<div style="left:674px;top:528px;width:48px;height:25px;display:flex;align-items:center;justify-content:center;white-space:nowrap;line-height:14px;background:#FDFAF7;color:#222222;"></div>
<div style="left:723px;top:528px;width:60px;height:25px;display:flex;align-items:center;justify-content:center;white-space:nowrap;line-height:14px;background:#F0F8FC;color:#222222;"></div>
<div style="left:784px;top:528px;width:60px;height:25px;display:flex;align-items:center;justify-content:center;white-space:nowrap;line-height:14px;background:#F0F8FC;color:#222222;"></div>
<div style="left:845px;top:528px;width:62px;height:25px;display:flex;align-items:center;justify-content:center;white-space:nowrap;line-height:14px;background:#F0F8FC;color:#222222;"></div>
<div style="left:908px;top:528px;width:34px;height:25px;display:flex;align-items:center;justify-content:center;white-space:nowrap;line-height:14px;background:#F0F0F0;color:#D42020;"><span>胜</span></div>
<div style="left:943px;top:528px;width:35px;height:25px;display:flex;align-items:center;justify-content:center;white-space:nowrap;line-height:14px;background:#F0F0F0;color:#222222;"></div>
<div style="left:979px;top:528px;width:53px;height:25px;display:flex;align-items:center;justify-content:center;white-space:nowrap;line-height:14px;background:#F0F0F0;color:#222222;"></div>
<div style="left:6px;top:554px;width:80px;height:25px;display:flex;align-items:center;justify-content:center;white-space:nowrap;line-height:14px;background:#00A6A6;color:#FFFFFF;"><span>球会友谊</span></div>
<div style="left:87px;top:554px;width:70px;height:25px;display:flex;align-items:center;justify-content:center;white-space:nowrap;line-height:14px;background:#FFFFFF;color:#222222;"><span>24-07-27</span></div>
<div style="left:158px;top:554px;width:147px;height:25px;display:flex;align-items:center;justify-content:center;white-space:nowrap;line-height:14px;background:#FFFFFF;color:#222222;"><span>米涅拉(中)</span></div>
<div style="left:306px;top:554px;width:82px;height:25px;display:flex;align-items:center;justify-content:center;white-space:nowrap;line-height:14px;background:#FFFFFF;color:#222222;"><span><span style="color:#D42020">1-1</span>(1-0)</span></div>
<div style="left:389px;top:554px;width:34px;height:25px;display:flex;align-items:center;justify-content:center;white-space:nowrap;line-height:14px;background:#FFFFFF;color:#222222;"><span>0-0</span></div>
<div style="left:424px;top:554px;width:127px;height:25px;display:flex;align-items:center;justify-content:center;white-space:nowrap;line-height:14px;background:#FFFFFF;color:#157A15;"><span>诺丁汉森林U21</span></div>
<div style="left:552px;top:554px;width:47px;height:25px;display:flex;align-items:center;justify-content:center;white-space:nowrap;line-height:14px;background:#FDFAF7;color:#222222;"></div>
<div style="left:600px;top:554px;width:73px;height:25px;display:flex;align-items:center;justify-content:center;white-space:nowrap;line-height:14px;background:#FDFAF7;color:#222222;"></div>
<div style="left:674px;top:554px;width:48px;height:25px;display:flex;align-items:center;justify-content:center;white-space:nowrap;line-height:14px;background:#FDFAF7;color:#222222;"></div>
<div style="left:723px;top:554px;width:60px;height:25px;display:flex;align-items:center;justify-content:center;white-space:nowrap;line-height:14px;background:#F0F8FC;color:#222222;"></div>
<div style="left:784px;top:554px;width:60px;height:25px;display:flex;align-items:center;justify-content:center;white-space:nowrap;line-height:14px;background:#F0F8FC;color:#222222;"></div>
<div style="left:845px;top:554px;width:62px;height:25px;display:flex;align-items:center;justify-content:center;white-space:nowrap;line-height:14px;background:#F0F8FC;color:#222222;"></div>
<div style="left:908px;top:554px;width:34px;height:25px;display:flex;align-items:center;justify-content:center;white-space:nowrap;line-height:14px;background:#FFFFFF;color:#157A15;"><span>平</span></div>
<div style="left:943px;top:554px;width:35px;height:25px;display:flex;align-items:center;justify-content:center;white-space:nowrap;line-height:14px;background:#FFFFFF;color:#222222;"></div>
<div style="left:979px;top:554px;width:53px;height:25px;display:flex;align-items:center;justify-content:center;white-space:nowrap;line-height:14px;background:#FFFFFF;color:#222222;"></div>
<div style="left:6px;top:580px;width:80px;height:25px;display:flex;align-items:center;justify-content:center;white-space:nowrap;line-height:14px;background:#00A6A6;color:#FFFFFF;"><span>球会友谊</span></div>
<div style="left:87px;top:580px;width:70px;height:25px;display:flex;align-items:center;justify-content:center;white-space:nowrap;line-height:14px;background:#F0F0F0;color:#222222;"><span>24-07-24</span></div>
<div style="left:158px;top:580px;width:147px;height:25px;display:flex;align-items:center;justify-content:center;white-space:nowrap;line-height:14px;background:#F0F0F0;color:#222222;"><span>穆尔西亚</span></div>
<div style="left:306px;top:580px;width:82px;height:25px;display:flex;align-items:center;justify-content:center;white-space:nowrap;line-height:14px;background:#F0F0F0;color:#222222;"><span><span style="color:#D42020">0-0</span>(0-0)</span></div>
<div style="left:389px;top:580px;width:34px;height:25px;display:flex;align-items:center;justify-content:center;white-space:nowrap;line-height:14px;background:#F0F0F0;color:#222222;"><span>2-3</span></div>
<div style="left:424px;top:580px;width:127px;height:25px;display:flex;align-items:center;justify-content:center;white-space:nowrap;line-height:14px;background:#F0F0F0;color:#157A15;"><span>诺丁汉森林U21<span class="bd">1</span></span></div>
<div style="left:552px;top:580px;width:47px;height:25px;display:flex;align-items:center;justify-content:center;white-space:nowrap;line-height:14px;background:#FDFAF7;color:#222222;"></div>
<div style="left:600px;top:580px;width:73px;height:25px;display:flex;align-items:center;justify-content:center;white-space:nowrap;line-height:14px;background:#FDFAF7;color:#222222;"></div>
<div style="left:674px;top:580px;width:48px;height:25px;display:flex;align-items:center;justify-content:center;white-space:nowrap;line-height:14px;background:#FDFAF7;color:#222222;"></div>
<div style="left:723px;top:580px;width:60px;height:25px;display:flex;align-items:center;justify-content:center;white-space:nowrap;line-height:14px;background:#F0F8FC;color:#222222;"><span>1.44</span></div>
<div style="left:784px;top:580px;width:60px;height:25px;display:flex;align-items:center;justify-content:center;white-space:nowrap;line-height:14px;background:#F0F8FC;color:#222222;"><span>4.39</span></div>
<div style="left:845px;top:580px;width:62px;height:25px;display:flex;align-items:center;justify-content:center;white-space:nowrap;line-height:14px;background:#F0F8FC;color:#222222;"><span>5.73</span></div>
<div style="left:908px;top:580px;width:34px;height:25px;display:flex;align-items:center;justify-content:center;white-space:nowrap;line-height:14px;background:#F0F0F0;color:#157A15;"><span>平</span></div>
<div style="left:943px;top:580px;width:35px;height:25px;display:flex;align-items:center;justify-content:center;white-space:nowrap;line-height:14px;background:#F0F0F0;color:#222222;"></div>
<div style="left:979px;top:580px;width:53px;height:25px;display:flex;align-items:center;justify-content:center;white-space:nowrap;line-height:14px;background:#F0F0F0;color:#222222;"></div>
<div style="left:6px;top:606px;width:80px;height:25px;display:flex;align-items:center;justify-content:center;white-space:nowrap;line-height:14px;background:#00A6A6;color:#FFFFFF;"><span>球会友谊</span></div>
<div style="left:87px;top:606px;width:70px;height:25px;display:flex;align-items:center;justify-content:center;white-space:nowrap;line-height:14px;background:#FFFFFF;color:#222222;"><span>24-07-21</span></div>
<div style="left:158px;top:606px;width:147px;height:25px;display:flex;align-items:center;justify-content:center;white-space:nowrap;line-height:14px;background:#FFFFFF;color:#157A15;"><span>诺丁汉森林U21(中)</span></div>
<div style="left:306px;top:606px;width:82px;height:25px;display:flex;align-items:center;justify-content:center;white-space:nowrap;line-height:14px;background:#FFFFFF;color:#222222;"><span><span style="color:#D42020">3-2</span>(3-0)</span></div>
<div style="left:389px;top:606px;width:34px;height:25px;display:flex;align-items:center;justify-content:center;white-space:nowrap;line-height:14px;background:#FFFFFF;color:#222222;"><span>0-0</span></div>
<div style="left:424px;top:606px;width:127px;height:25px;display:flex;align-items:center;justify-content:center;white-space:nowrap;line-height:14px;background:#FFFFFF;color:#222222;"><span>伯恩茅斯U21</span></div>
<div style="left:552px;top:606px;width:47px;height:25px;display:flex;align-items:center;justify-content:center;white-space:nowrap;line-height:14px;background:#FDFAF7;color:#222222;"></div>
<div style="left:600px;top:606px;width:73px;height:25px;display:flex;align-items:center;justify-content:center;white-space:nowrap;line-height:14px;background:#FDFAF7;color:#222222;"></div>
<div style="left:674px;top:606px;width:48px;height:25px;display:flex;align-items:center;justify-content:center;white-space:nowrap;line-height:14px;background:#FDFAF7;color:#222222;"></div>
<div style="left:723px;top:606px;width:60px;height:25px;display:flex;align-items:center;justify-content:center;white-space:nowrap;line-height:14px;background:#F0F8FC;color:#222222;"></div>
<div style="left:784px;top:606px;width:60px;height:25px;display:flex;align-items:center;justify-content:center;white-space:nowrap;line-height:14px;background:#F0F8FC;color:#222222;"></div>
<div style="left:845px;top:606px;width:62px;height:25px;display:flex;align-items:center;justify-content:center;white-space:nowrap;line-height:14px;background:#F0F8FC;color:#222222;"></div>
<div style="left:908px;top:606px;width:34px;height:25px;display:flex;align-items:center;justify-content:center;white-space:nowrap;line-height:14px;background:#FFFFFF;color:#D42020;"><span>胜</span></div>
<div style="left:943px;top:606px;width:35px;height:25px;display:flex;align-items:center;justify-content:center;white-space:nowrap;line-height:14px;background:#FFFFFF;color:#222222;"></div>
<div style="left:979px;top:606px;width:53px;height:25px;display:flex;align-items:center;justify-content:center;white-space:nowrap;line-height:14px;background:#FFFFFF;color:#222222;"></div>
<div style="left:6px;top:632px;width:80px;height:25px;display:flex;align-items:center;justify-content:center;white-space:nowrap;line-height:14px;background:#EE9A38;color:#FFFFFF;"><span>英U21</span></div>
<div style="left:87px;top:632px;width:70px;height:25px;display:flex;align-items:center;justify-content:center;white-space:nowrap;line-height:14px;background:#F0F0F0;color:#222222;"><span>24-05-11</span></div>
<div style="left:158px;top:632px;width:147px;height:25px;display:flex;align-items:center;justify-content:center;white-space:nowrap;line-height:14px;background:#F0F0F0;color:#222222;"><span>雷丁U21</span></div>
<div style="left:306px;top:632px;width:82px;height:25px;display:flex;align-items:center;justify-content:center;white-space:nowrap;line-height:14px;background:#F0F0F0;color:#222222;"><span><span style="color:#D42020">3-1</span>(2-1)</span></div>
<div style="left:389px;top:632px;width:34px;height:25px;display:flex;align-items:center;justify-content:center;white-space:nowrap;line-height:14px;background:#F0F0F0;color:#222222;"><span>6-2</span></div>
<div style="left:424px;top:632px;width:127px;height:25px;display:flex;align-items:center;justify-content:center;white-space:nowrap;line-height:14px;background:#F0F0F0;color:#157A15;"><span>诺丁汉森林U21</span></div>
<div style="left:552px;top:632px;width:47px;height:25px;display:flex;align-items:center;justify-content:center;white-space:nowrap;line-height:14px;background:#FDFAF7;color:#222222;"></div>
<div style="left:600px;top:632px;width:73px;height:25px;display:flex;align-items:center;justify-content:center;white-space:nowrap;line-height:14px;background:#FDFAF7;color:#222222;"></div>
<div style="left:674px;top:632px;width:48px;height:25px;display:flex;align-items:center;justify-content:center;white-space:nowrap;line-height:14px;background:#FDFAF7;color:#222222;"></div>
<div style="left:723px;top:632px;width:60px;height:25px;display:flex;align-items:center;justify-content:center;white-space:nowrap;line-height:14px;background:#F0F8FC;color:#222222;"><span>1.93</span></div>
<div style="left:784px;top:632px;width:60px;height:25px;display:flex;align-items:center;justify-content:center;white-space:nowrap;line-height:14px;background:#F0F8FC;color:#222222;"><span>4.15</span></div>
<div style="left:845px;top:632px;width:62px;height:25px;display:flex;align-items:center;justify-content:center;white-space:nowrap;line-height:14px;background:#F0F8FC;color:#222222;"><span>2.98</span></div>
<div style="left:908px;top:632px;width:34px;height:25px;display:flex;align-items:center;justify-content:center;white-space:nowrap;line-height:14px;background:#F0F0F0;color:#1818B0;"><span>负</span></div>
<div style="left:943px;top:632px;width:35px;height:25px;display:flex;align-items:center;justify-content:center;white-space:nowrap;line-height:14px;background:#F0F0F0;color:#222222;"></div>
<div style="left:979px;top:632px;width:53px;height:25px;display:flex;align-items:center;justify-content:center;white-space:nowrap;line-height:14px;background:#F0F0F0;color:#222222;"></div>
<div style="left:6px;top:658px;width:80px;height:25px;display:flex;align-items:center;justify-content:center;white-space:nowrap;line-height:14px;background:#EE9A38;color:#FFFFFF;"><span>英U21</span></div>
<div style="left:87px;top:658px;width:70px;height:25px;display:flex;align-items:center;justify-content:center;white-space:nowrap;line-height:14px;background:#FFFFFF;color:#222222;"><span>24-05-07</span></div>
<div style="left:158px;top:658px;width:147px;height:25px;display:flex;align-items:center;justify-content:center;white-space:nowrap;line-height:14px;background:#FFFFFF;color:#222222;"><span>富咸U21</span></div>
<div style="left:306px;top:658px;width:82px;height:25px;display:flex;align-items:center;justify-content:center;white-space:nowrap;line-height:14px;background:#FFFFFF;color:#222222;"><span><span style="color:#D42020">0-2</span>(0-1)</span></div>
<div style="left:389px;top:658px;width:34px;height:25px;display:flex;align-items:center;justify-content:center;white-space:nowrap;line-height:14px;background:#FFFFFF;color:#222222;"><span>7-6</span></div>
<div style="left:424px;top:658px;width:127px;height:25px;display:flex;align-items:center;justify-content:center;white-space:nowrap;line-height:14px;background:#FFFFFF;color:#157A15;"><span>诺丁汉森林U21</span></div>
<div style="left:552px;top:658px;width:47px;height:25px;display:flex;align-items:center;justify-content:center;white-space:nowrap;line-height:14px;background:#FDFAF7;color:#222222;"></div>
<div style="left:600px;top:658px;width:73px;height:25px;display:flex;align-items:center;justify-content:center;white-space:nowrap;line-height:14px;background:#FDFAF7;color:#222222;"></div>
<div style="left:674px;top:658px;width:48px;height:25px;display:flex;align-items:center;justify-content:center;white-space:nowrap;line-height:14px;background:#FDFAF7;color:#222222;"></div>
<div style="left:723px;top:658px;width:60px;height:25px;display:flex;align-items:center;justify-content:center;white-space:nowrap;line-height:14px;background:#F0F8FC;color:#222222;"><span>1.45</span></div>
<div style="left:784px;top:658px;width:60px;height:25px;display:flex;align-items:center;justify-content:center;white-space:nowrap;line-height:14px;background:#F0F8FC;color:#222222;"><span>5.12</span></div>
<div style="left:845px;top:658px;width:62px;height:25px;display:flex;align-items:center;justify-content:center;white-space:nowrap;line-height:14px;background:#F0F8FC;color:#222222;"><span>4.75</span></div>
<div style="left:908px;top:658px;width:34px;height:25px;display:flex;align-items:center;justify-content:center;white-space:nowrap;line-height:14px;background:#FFFFFF;color:#D42020;"><span>胜</span></div>
<div style="left:943px;top:658px;width:35px;height:25px;display:flex;align-items:center;justify-content:center;white-space:nowrap;line-height:14px;background:#FFFFFF;color:#222222;"></div>
<div style="left:979px;top:658px;width:53px;height:25px;display:flex;align-items:center;justify-content:center;white-space:nowrap;line-height:14px;background:#FFFFFF;color:#222222;"></div>
<div style="left:6px;top:684px;width:80px;height:25px;display:flex;align-items:center;justify-content:center;white-space:nowrap;line-height:14px;background:#FF9966;color:#FFFFFF;"><span>英U21杯</span></div>
<div style="left:87px;top:684px;width:70px;height:25px;display:flex;align-items:center;justify-content:center;white-space:nowrap;line-height:14px;background:#F0F0F0;color:#222222;"><span>24-05-03</span></div>
<div style="left:158px;top:684px;width:147px;height:25px;display:flex;align-items:center;justify-content:center;white-space:nowrap;line-height:14px;background:#F0F0F0;color:#222222;"><span>托特纳姆热刺U21</span></div>
<div style="left:306px;top:684px;width:82px;height:25px;display:flex;align-items:center;justify-content:center;white-space:nowrap;line-height:14px;background:#F0F0F0;color:#222222;"><span><span style="color:#D42020">4-3</span>(0-3)</span></div>
<div style="left:389px;top:684px;width:34px;height:25px;display:flex;align-items:center;justify-content:center;white-space:nowrap;line-height:14px;background:#F0F0F0;color:#222222;"><span>8-3</span></div>
<div style="left:424px;top:684px;width:127px;height:25px;display:flex;align-items:center;justify-content:center;white-space:nowrap;line-height:14px;background:#F0F0F0;color:#157A15;"><span>诺丁汉森林U21</span></div>
<div style="left:552px;top:684px;width:47px;height:25px;display:flex;align-items:center;justify-content:center;white-space:nowrap;line-height:14px;background:#FDFAF7;color:#222222;"><span>0.75</span></div>
<div style="left:600px;top:684px;width:73px;height:25px;display:flex;align-items:center;justify-content:center;white-space:nowrap;line-height:14px;background:#FDFAF7;color:#222222;"><span>一球</span></div>
<div style="left:674px;top:684px;width:48px;height:25px;display:flex;align-items:center;justify-content:center;white-space:nowrap;line-height:14px;background:#FDFAF7;color:#222222;"><span>1.07</span></div>
<div style="left:723px;top:684px;width:60px;height:25px;display:flex;align-items:center;justify-content:center;white-space:nowrap;line-height:14px;background:#F0F8FC;color:#222222;"><span>1.49</span></div>
<div style="left:784px;top:684px;width:60px;height:25px;display:flex;align-items:center;justify-content:center;white-space:nowrap;line-height:14px;background:#F0F8FC;color:#222222;"><span>5.08</span></div>
<div style="left:845px;top:684px;width:62px;height:25px;display:flex;align-items:center;justify-content:center;white-space:nowrap;line-height:14px;background:#F0F8FC;color:#222222;"><span>4.49</span></div>
<div style="left:908px;top:684px;width:34px;height:25px;display:flex;align-items:center;justify-content:center;white-space:nowrap;line-height:14px;background:#F0F0F0;color:#1818B0;"><span>负</span></div>
<div style="left:943px;top:684px;width:35px;height:25px;display:flex;align-items:center;justify-content:center;white-space:nowrap;line-height:14px;background:#F0F0F0;color:#157A15;"><span>走</span></div>
<div style="left:979px;top:684px;width:53px;height:25px;display:flex;align-items:center;justify-content:center;white-space:nowrap;line-height:14px;background:#F0F0F0;color:#D42020;"><span>大</span></div>
<div style="left:6px;top:710px;width:1026px;height:25px;display:flex;align-items:center;justify-content:center;white-space:nowrap;line-height:14px;background:#FFFFFF;color:#222222;letter-spacing:0.15px;word-spacing:1px;"><span>近<span style="color:#D42020">10</span>场,胜6平2负2, 胜率:<span style="color:#D42020">60%</span> 让胜率:<span style="color:#D42020">66.7%</span> 大率:<span style="color:#D42020">33.3%</span> 单率:<span style="color:#D42020">30%</span></span></div>
<div style="left:5px;top:410px;width:1028px;height:1px;background:#BBBBBB"></div>
<div style="left:551px;top:430px;width:482px;height:1px;background:#BBBBBB"></div>
<div style="left:5px;top:449px;width:1028px;height:1px;background:#BBBBBB"></div>
<div style="left:5px;top:475px;width:1028px;height:1px;background:#BBBBBB"></div>
<div style="left:5px;top:501px;width:1028px;height:1px;background:#BBBBBB"></div>
<div style="left:5px;top:527px;width:1028px;height:1px;background:#BBBBBB"></div>
<div style="left:5px;top:553px;width:1028px;height:1px;background:#BBBBBB"></div>
<div style="left:5px;top:579px;width:1028px;height:1px;background:#BBBBBB"></div>
<div style="left:5px;top:605px;width:1028px;height:1px;background:#BBBBBB"></div>
<div style="left:5px;top:631px;width:1028px;height:1px;background:#BBBBBB"></div>
<div style="left:5px;top:657px;width:1028px;height:1px;background:#BBBBBB"></div>
<div style="left:5px;top:683px;width:1028px;height:1px;background:#BBBBBB"></div>
<div style="left:5px;top:709px;width:1028px;height:1px;background:#BBBBBB"></div>
<div style="left:5px;top:735px;width:1028px;height:1px;background:#BBBBBB"></div>
<div style="left:5px;top:410px;width:1px;height:326px;background:#BBBBBB"></div>
<div style="left:86px;top:410px;width:1px;height:300px;background:#BBBBBB"></div>
<div style="left:157px;top:410px;width:1px;height:300px;background:#BBBBBB"></div>
<div style="left:305px;top:410px;width:1px;height:300px;background:#BBBBBB"></div>
<div style="left:388px;top:410px;width:1px;height:300px;background:#BBBBBB"></div>
<div style="left:423px;top:410px;width:1px;height:300px;background:#BBBBBB"></div>
<div style="left:551px;top:410px;width:1px;height:300px;background:#BBBBBB"></div>
<div style="left:599px;top:430px;width:1px;height:280px;background:#BBBBBB"></div>
<div style="left:673px;top:430px;width:1px;height:280px;background:#BBBBBB"></div>
<div style="left:722px;top:410px;width:1px;height:300px;background:#BBBBBB"></div>
<div style="left:783px;top:430px;width:1px;height:280px;background:#BBBBBB"></div>
<div style="left:844px;top:430px;width:1px;height:280px;background:#BBBBBB"></div>
<div style="left:907px;top:410px;width:1px;height:300px;background:#BBBBBB"></div>
<div style="left:942px;top:430px;width:1px;height:280px;background:#BBBBBB"></div>
<div style="left:978px;top:430px;width:1px;height:280px;background:#BBBBBB"></div>
<div style="left:1032px;top:410px;width:1px;height:326px;background:#BBBBBB"></div>
<div style="left:5px;top:449px;width:82px;height:27px;background:#EE9A38"></div>
<div style="left:6px;top:450px;width:80px;height:25px;display:flex;align-items:center;justify-content:center;white-space:nowrap;line-height:14px;color:#FFFFFF;"><span>英U21</span></div>
<div style="left:5px;top:449px;width:82px;height:1px;background:#D4AA7A"></div>
<div style="left:86px;top:450px;width:1px;height:25px;background:#DAA76C"></div>
<div style="left:5px;top:450px;width:1px;height:25px;background:#DAA76C"></div>
<div style="left:5px;top:475px;width:82px;height:27px;background:#EE9A38"></div>
<div style="left:6px;top:476px;width:80px;height:25px;display:flex;align-items:center;justify-content:center;white-space:nowrap;line-height:14px;color:#FFFFFF;"><span>英U21</span></div>
<div style="left:5px;top:475px;width:82px;height:1px;background:#F5C288"></div>
<div style="left:86px;top:476px;width:1px;height:25px;background:#DAA76C"></div>
<div style="left:5px;top:476px;width:1px;height:25px;background:#DAA76C"></div>
<div style="left:5px;top:501px;width:82px;height:27px;background:#EE9A38"></div>
<div style="left:6px;top:502px;width:80px;height:25px;display:flex;align-items:center;justify-content:center;white-space:nowrap;line-height:14px;color:#FFFFFF;"><span>英U21</span></div>
<div style="left:5px;top:501px;width:82px;height:1px;background:#F5C288"></div>
<div style="left:86px;top:502px;width:1px;height:25px;background:#DAA76C"></div>
<div style="left:5px;top:502px;width:1px;height:25px;background:#DAA76C"></div>
<div style="left:5px;top:527px;width:82px;height:27px;background:#00A6A6"></div>
<div style="left:6px;top:528px;width:80px;height:25px;display:flex;align-items:center;justify-content:center;white-space:nowrap;line-height:14px;color:#FFFFFF;"><span>球会友谊</span></div>
<div style="left:5px;top:527px;width:82px;height:1px;background:#77A06F"></div>
<div style="left:86px;top:528px;width:1px;height:25px;background:#4BAEAE"></div>
<div style="left:5px;top:528px;width:1px;height:25px;background:#4BAEAE"></div>
<div style="left:5px;top:553px;width:82px;height:27px;background:#00A6A6"></div>
<div style="left:6px;top:554px;width:80px;height:25px;display:flex;align-items:center;justify-content:center;white-space:nowrap;line-height:14px;color:#FFFFFF;"><span>球会友谊</span></div>
<div style="left:5px;top:553px;width:82px;height:1px;background:#66CACA"></div>
<div style="left:86px;top:554px;width:1px;height:25px;background:#4BAEAE"></div>
<div style="left:5px;top:554px;width:1px;height:25px;background:#4BAEAE"></div>
<div style="left:5px;top:579px;width:82px;height:27px;background:#00A6A6"></div>
<div style="left:6px;top:580px;width:80px;height:25px;display:flex;align-items:center;justify-content:center;white-space:nowrap;line-height:14px;color:#FFFFFF;"><span>球会友谊</span></div>
<div style="left:5px;top:579px;width:82px;height:1px;background:#66CACA"></div>
<div style="left:86px;top:580px;width:1px;height:25px;background:#4BAEAE"></div>
<div style="left:5px;top:580px;width:1px;height:25px;background:#4BAEAE"></div>
<div style="left:5px;top:605px;width:82px;height:27px;background:#00A6A6"></div>
<div style="left:6px;top:606px;width:80px;height:25px;display:flex;align-items:center;justify-content:center;white-space:nowrap;line-height:14px;color:#FFFFFF;"><span>球会友谊</span></div>
<div style="left:5px;top:605px;width:82px;height:1px;background:#66CACA"></div>
<div style="left:86px;top:606px;width:1px;height:25px;background:#4BAEAE"></div>
<div style="left:5px;top:606px;width:1px;height:25px;background:#4BAEAE"></div>
<div style="left:5px;top:631px;width:82px;height:27px;background:#EE9A38"></div>
<div style="left:6px;top:632px;width:80px;height:25px;display:flex;align-items:center;justify-content:center;white-space:nowrap;line-height:14px;color:#FFFFFF;"><span>英U21</span></div>
<div style="left:5px;top:631px;width:82px;height:1px;background:#77A06F"></div>
<div style="left:86px;top:632px;width:1px;height:25px;background:#DAA76C"></div>
<div style="left:5px;top:632px;width:1px;height:25px;background:#DAA76C"></div>
<div style="left:5px;top:657px;width:82px;height:27px;background:#EE9A38"></div>
<div style="left:6px;top:658px;width:80px;height:25px;display:flex;align-items:center;justify-content:center;white-space:nowrap;line-height:14px;color:#FFFFFF;"><span>英U21</span></div>
<div style="left:5px;top:657px;width:82px;height:1px;background:#F5C288"></div>
<div style="left:86px;top:658px;width:1px;height:25px;background:#DAA76C"></div>
<div style="left:5px;top:658px;width:1px;height:25px;background:#DAA76C"></div>
<div style="left:5px;top:683px;width:82px;height:27px;background:#FF9966"></div>
<div style="left:6px;top:684px;width:80px;height:25px;display:flex;align-items:center;justify-content:center;white-space:nowrap;line-height:14px;color:#FFFFFF;"><span>英U21杯</span></div>
<div style="left:5px;top:683px;width:82px;height:1px;background:#F69A4F"></div>
<div style="left:86px;top:684px;width:1px;height:25px;background:#E4A788"></div>
<div style="left:5px;top:684px;width:1px;height:25px;background:#E4A788"></div>
<div style="left:5px;top:709px;width:82px;height:1px;background:#DDAA90"></div></body></html>
